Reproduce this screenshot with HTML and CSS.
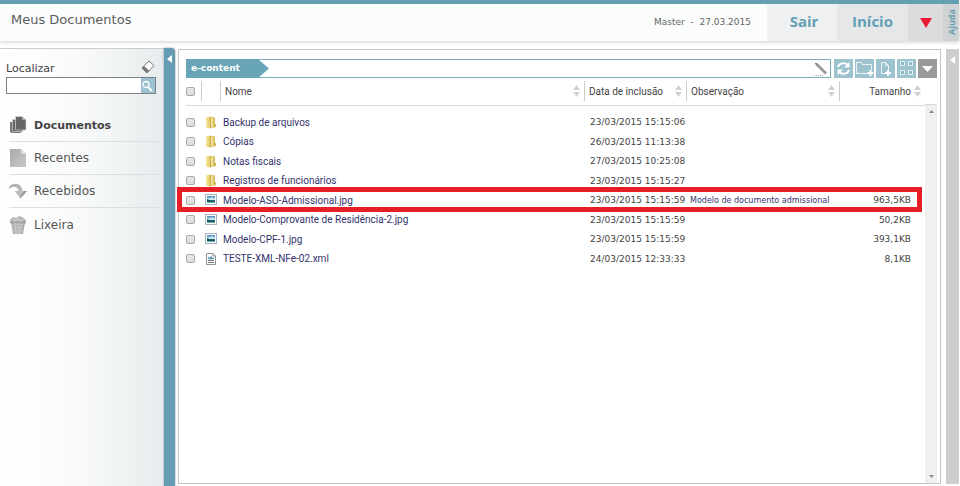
FILE: index.html
```html
<!DOCTYPE html>
<html lang="pt-BR">
<head>
    <meta charset="UTF-8">
    <title>Meus Documentos</title>
    <link rel="stylesheet" href="styles.css">
</head>
<body>
    <svg class="defs" width="0" height="0" aria-hidden="true">
        <defs>
            <linearGradient id="gold" x1="0" x2="1" y1="0" y2="0">
                <stop offset="0" stop-color="#f5ea9f"/>
                <stop offset="1" stop-color="#dfc55e"/>
            </linearGradient>
            <linearGradient id="sky" x1="0" x2="0" y1="0" y2="1">
                <stop offset="0" stop-color="#3f86b8"/>
                <stop offset="0.5" stop-color="#c6e6ee"/>
                <stop offset="0.6" stop-color="#1f6b70"/>
                <stop offset="1" stop-color="#7fc0bb"/>
            </linearGradient>
            <linearGradient id="gray" x1="0" x2="1" y1="0" y2="1">
                <stop offset="0" stop-color="#a9a9a9"/>
                <stop offset="1" stop-color="#c9c9c9"/>
            </linearGradient>
        </defs>
        <symbol id="folder" viewBox="0 0 12 13">
            <path d="M5 1h4l1 1v6l1 1v2l-4 1H5z" fill="#dcc062"/>
            <path d="M6 2l2-.5V11l-2 .5z" fill="#efe099"/>
            <path d="M1 1.500L5.500 .5v12L1 11.500z" fill="url(#gold)"/>
            <path d="M5.500 1v11.500" stroke="#c3a345" stroke-width=".6"/>
            <path d="M9 9h2" stroke="#b8963c"/>
        </symbol>
        <symbol id="image" viewBox="0 0 12 12">
            <rect x=".5" y=".5" width="11" height="10" fill="#fff" stroke="#a9b4c0"/>
            <rect x="2" y="2" width="8" height="7" fill="url(#sky)"/>
            <path d="M2 5l3 1.500 5 .5v1H2z" fill="#17555f"/>
            <path d="M4 4.500h5l-2-1z" fill="#fff"/>
        </symbol>
        <symbol id="xml" viewBox="0 0 12 12">
            <path d="M1.500.5H8L10.500 3v8.500h-9z" fill="#fff" stroke="#8d949b"/>
            <path d="M8 .5V3h2.500" fill="#ddd" stroke="#8d949b"/>
            <path d="M3 4l1.500 2L6 4l1 2 2-1" fill="none" stroke="#4b86a5" stroke-width="1.200"/>
            <path d="M3 7.500h6M3 9.500h6" stroke="#777"/>
        </symbol>
        <symbol id="sort" viewBox="0 0 7 12">
            <path d="M3.500 0L7 5H0zM3.500 12L0 7h7z" fill="#d2d2d2"/>
        </symbol>
    </svg>

    <header class="topbar">
        <h1>Meus Documentos</h1>
        <span class="user">Master &nbsp;-&nbsp; 27.03.2015</span>
        <a href="#" class="tab sair">Sair</a>
        <a href="#" class="tab inicio">Início</a>
        <button type="button" class="more" aria-label="Mais opções">
            <svg width="12" height="10" viewBox="0 0 12 10"><path d="M0 0h12L6 10z" fill="#ed1c35"/></svg>
        </button>
        <a href="#" class="help"><span>Ajuda</span></a>
    </header>

    <main class="page">
        <aside class="sidebar">
            <form class="search">
                <div class="search-head">
                    <label for="busca">Localizar</label>
                    <button type="reset" aria-label="Limpar">
                        <svg width="14" height="14" viewBox="0 0 14 14">
                            <path d="M1 8L8 1l5 4.500L6 13z" fill="#fff" stroke="#777"/>
                            <path d="M1 8l2-2 5 4.500L6 13z" fill="#777"/>
                        </svg>
                    </button>
                </div>
                <div class="search-box">
                    <input type="text" id="busca">
                    <button type="submit" aria-label="Buscar">
                        <svg width="13" height="14" viewBox="0 0 13 14">
                            <circle cx="5" cy="5.500" r="3" fill="none" stroke="#fff" stroke-width="1.300"/>
                            <path d="M7 8l4 4" stroke="#fff" stroke-width="2"/>
                        </svg>
                    </button>
                </div>
            </form>
            <nav class="menu">
                <a href="#" class="active">
                    <svg width="18" height="20" viewBox="0 0 18 20">
                        <path d="M1 7h3v9h8v2H3l-2-1z" fill="#777"/>
                        <path d="M3.500 4.500H7v10h7v2H3.500z" fill="#666" stroke="#ddd" stroke-width=".6"/>
                        <path d="M6.500 1.500H13L17 5v10H6.500z" fill="#666" stroke="#ddd" stroke-width=".6"/>
                        <path d="M13 1.500V5h4z" fill="#aaa"/>
                    </svg>
                    Documentos
                </a>
                <a href="#">
                    <svg width="18" height="20" viewBox="0 0 18 20">
                        <path d="M1 1h11l5 5v13H1z" fill="url(#gray)"/>
                        <path d="M12 1v5h5z" fill="#dedede"/>
                    </svg>
                    Recentes
                </a>
                <a href="#">
                    <svg width="18" height="20" viewBox="0 0 19 20">
                        <path d="M0 6C3 1 13 0 14.500 10H19l-7 8-6-8h4C9 5 5 4 0 8z" fill="url(#gray)"/>
                        <path d="M12 18l7-8h-3l-4 5z" fill="#999"/>
                    </svg>
                    Recebidos
                </a>
                <a href="#">
                    <svg width="18" height="20" viewBox="0 0 18 20">
                        <path d="M1 5l3-3 3 1 3-2 3 1 4 3v3H1z" fill="#b3b3b3"/>
                        <path d="M2 8h14l-2 11H4z" fill="#adadad"/>
                        <path d="M1 7.500h16" stroke="#a2a2a2" stroke-width="1.500"/>
                        <path d="M3 10h12M3 13h12M4 16h10M6 8l1 11M9 8v11M12 8l-1 11" stroke="#d6d6d6" stroke-dasharray="2 1"/>
                        <path d="M4 4l2 2 3-3 2 3 3-2" fill="none" stroke="#ddd"/>
                    </svg>
                    Lixeira
                </a>
            </nav>
        </aside>
        <button type="button" class="handle handle-left" aria-label="Recolher menu">
            <svg width="5" height="8" viewBox="0 0 5 8"><path d="M5 0v8L0 4z" fill="#fff"/></svg>
        </button>

        <section class="panel">
            <div class="toolbar">
                <div class="path">
                    <a href="#" class="crumb">e-content</a>
                    <svg width="14" height="14" viewBox="0 0 14 14">
                        <path d="M1 1l3 .5 9 9-2 2-9-9z" fill="#999"/>
                        <path d="M1 1l2 .5-1 1z" fill="#555"/>
                        <path d="M0 13.500h9" stroke="#aaa" stroke-dasharray="1 1"/>
                    </svg>
                </div>
                <button type="button" aria-label="Atualizar">
                    <svg width="19" height="19" viewBox="0 0 19 19" fill="none" stroke="#fff" stroke-width="2">
                        <path d="M4 8c1-4 7-5 10-2M15 11c-1 4-7 5-10 2"/>
                        <path d="M15.500 3v5.500H10zM3.500 16v-5.500H9z" fill="#fff" stroke="none"/>
                    </svg>
                </button>
                <button type="button" aria-label="Nova pasta">
                    <svg width="19" height="19" viewBox="0 0 19 19" fill="none" stroke="#fff">
                        <path d="M13 14.500H1.500v-11h5l1 2h9V11" opacity=".8"/>
                        <path d="M15.500 11v6M12.500 14h6" stroke-width="2"/>
                    </svg>
                </button>
                <button type="button" aria-label="Novo documento">
                    <svg width="19" height="19" viewBox="0 0 19 19" fill="none" stroke="#fff">
                        <path d="M9 14.500H5.500v-11h4l3 3V11M9.500 3.500v3h3" opacity=".8"/>
                        <path d="M12 11v6M9 14h6" stroke-width="2"/>
                    </svg>
                </button>
                <button type="button" aria-label="Grade">
                    <svg width="19" height="19" viewBox="0 0 19 19" fill="#8fb9c6" stroke="#e4eff2">
                        <rect x="3.500" y="2.500" width="4" height="4"/>
                        <rect x="11.500" y="2.500" width="4" height="4"/>
                        <rect x="3.500" y="11.500" width="4" height="4"/>
                        <rect x="11.500" y="11.500" width="4" height="4"/>
                    </svg>
                </button>
                <button type="button" class="gray" aria-label="Opções">
                    <svg width="19" height="19" viewBox="0 0 19 19"><path d="M4 7h11l-5.500 6z" fill="#fff"/></svg>
                </button>
            </div>

            <div class="list">
                <table>
                    <thead>
                        <tr>
                            <th class="c-check"><input type="checkbox" aria-label="Selecionar todos"></th>
                            <th class="c-icon"><div></div></th>
                            <th class="c-name"><div>Nome <svg width="7" height="12"><use href="#sort"/></svg></div></th>
                            <th class="c-date"><div>Data de inclusão <svg width="7" height="12"><use href="#sort"/></svg></div></th>
                            <th class="c-obs"><div>Observação <svg width="7" height="12"><use href="#sort"/></svg></div></th>
                            <th class="c-size"><div>Tamanho <svg width="7" height="12"><use href="#sort"/></svg></div></th>
                        </tr>
                    </thead>
                    <tbody>
                        <tr>
                            <td><input type="checkbox" aria-label="Backup de arquivos"></td>
                            <td><svg width="12" height="13"><use href="#folder"/></svg></td>
                            <td class="name"><a href="#">Backup de arquivos</a></td>
                            <td class="date">23/03/2015 15:15:06</td>
                            <td class="obs"></td>
                            <td class="size"></td>
                        </tr>
                        <tr>
                            <td><input type="checkbox" aria-label="Cópias"></td>
                            <td><svg width="12" height="13"><use href="#folder"/></svg></td>
                            <td class="name"><a href="#">Cópias</a></td>
                            <td class="date">26/03/2015 11:13:38</td>
                            <td class="obs"></td>
                            <td class="size"></td>
                        </tr>
                        <tr>
                            <td><input type="checkbox" aria-label="Notas fiscais"></td>
                            <td><svg width="12" height="13"><use href="#folder"/></svg></td>
                            <td class="name"><a href="#">Notas fiscais</a></td>
                            <td class="date">27/03/2015 10:25:08</td>
                            <td class="obs"></td>
                            <td class="size"></td>
                        </tr>
                        <tr>
                            <td><input type="checkbox" aria-label="Registros de funcionários"></td>
                            <td><svg width="12" height="13"><use href="#folder"/></svg></td>
                            <td class="name"><a href="#">Registros de funcionários</a></td>
                            <td class="date">23/03/2015 15:15:27</td>
                            <td class="obs"></td>
                            <td class="size"></td>
                        </tr>
                        <tr class="marked">
                            <td><input type="checkbox" aria-label="Modelo-ASO-Admissional.jpg"></td>
                            <td><svg width="12" height="12"><use href="#image"/></svg></td>
                            <td class="name"><a href="#">Modelo-ASO-Admissional.jpg</a></td>
                            <td class="date">23/03/2015 15:15:59</td>
                            <td class="obs">Modelo de documento admissional</td>
                            <td class="size">963,5KB</td>
                        </tr>
                        <tr>
                            <td><input type="checkbox" aria-label="Modelo-Comprovante de Residência-2.jpg"></td>
                            <td><svg width="12" height="12"><use href="#image"/></svg></td>
                            <td class="name"><a href="#">Modelo-Comprovante de Residência-2.jpg</a></td>
                            <td class="date">23/03/2015 15:15:59</td>
                            <td class="obs"></td>
                            <td class="size">50,2KB</td>
                        </tr>
                        <tr>
                            <td><input type="checkbox" aria-label="Modelo-CPF-1.jpg"></td>
                            <td><svg width="12" height="12"><use href="#image"/></svg></td>
                            <td class="name"><a href="#">Modelo-CPF-1.jpg</a></td>
                            <td class="date">23/03/2015 15:15:59</td>
                            <td class="obs"></td>
                            <td class="size">393,1KB</td>
                        </tr>
                        <tr>
                            <td><input type="checkbox" aria-label="TESTE-XML-NFe-02.xml"></td>
                            <td><svg width="12" height="12"><use href="#xml"/></svg></td>
                            <td class="name"><a href="#">TESTE-XML-NFe-02.xml</a></td>
                            <td class="date">24/03/2015 12:33:33</td>
                            <td class="obs"></td>
                            <td class="size">8,1KB</td>
                        </tr>
                    </tbody>
                </table>
                <div class="scroll">
                    <svg width="5" height="3" viewBox="0 0 5 3"><path d="M0 3L2.500 0 5 3z" fill="#8a8a8a"/></svg>
                    <svg width="5" height="3" viewBox="0 0 5 3"><path d="M0 0h5L2.500 3z" fill="#8a8a8a"/></svg>
                </div>
            </div>
        </section>

        <button type="button" class="handle handle-right" aria-label="Abrir ajuda">
            <svg width="5" height="8" viewBox="0 0 5 8"><path d="M5 0v8L0 4z" fill="#fff"/></svg>
        </button>
    </main>
</body>
</html>
```
FILE: styles.css
```css
* {
    box-sizing: border-box;
}

body {
    margin: 0;
    min-height: 100vh;
    display: flex;
    flex-direction: column;
    background: #fff;
    color: #444;
    font-family: "DejaVu Sans", Verdana, sans-serif;
    font-size: 9px;
}

a {
    color: inherit;
    text-decoration: none;
}

button {
    border: none;
    padding: 0;
    background: none;
    cursor: pointer;
}

svg {
    display: block;
    flex: none;
}

.defs {
    position: absolute;
}

/* topo */
.topbar {
    display: flex;
    height: 41px;
    margin-right: 1px;
    border-top: 4px solid #659fb4;
    background: #fbfcfc;
    box-shadow: 0 1px 4px rgba(0, 0, 0, 0.2);
}

.topbar h1 {
    flex: 1;
    margin: 0;
    padding-left: 11px;
    color: #5c5c5c;
    font-size: 13px;
    font-weight: normal;
    line-height: 32px;
}

.user {
    margin-right: 16px;
    color: #666;
    line-height: 36px;
}

.tab {
    color: #62a0b5;
    font-family: "Open Sans", sans-serif;
    font-size: 15px;
    font-weight: bold;
    line-height: 34px;
    text-align: center;
}

.sair {
    width: 70px;
    padding-left: 4px;
    background: #eff0f2;
}

.inicio {
    width: 71px;
    background: #e6e7e9;
}

.more {
    display: flex;
    align-items: center;
    justify-content: center;
    width: 35px;
    background: #dcdcde;
}

.help {
    display: flex;
    align-items: center;
    justify-content: center;
    width: 16px;
    background: #d0d2d4;
    color: #69a0b3;
    font-family: "Open Sans", sans-serif;
    font-size: 9px;
    font-weight: bold;
}

.help span {
    writing-mode: vertical-rl;
    transform: rotate(180deg);
}

.page {
    flex: 1;
    display: flex;
    padding-top: 7px;
}

/* menu lateral */
.sidebar {
    width: 164px;
    padding: 11px 6px 10px;
    border-top: 1px solid #ccc;
    background: linear-gradient(to right, #fff, #f8fafa 50%, #e8ebed);
}

.search {
    margin-right: 2px;
}

.search-head {
    display: flex;
    align-items: flex-start;
    justify-content: space-between;
    height: 17px;
    font-size: 11px;
    line-height: 18px;
}

.search-head button {
    margin-right: 1px;
}

.search-box {
    display: flex;
    height: 17px;
    border: 1px solid #7d8288;
    background: #fff;
}

.search-box input {
    flex: 1;
    min-width: 0;
    border: none;
    padding: 0 3px;
    background: none;
    font: inherit;
}

.search-box button {
    width: 14px;
    background: #9cc3cf;
}

.menu {
    margin: 15px 0 0 3px;
}

.menu a {
    display: flex;
    align-items: center;
    gap: 7px;
    height: 33px;
    border-bottom: 1px solid #dcdfe1;
    color: #555;
    font-size: 12px;
}

.menu a:last-child {
    border-bottom: none;
}

.menu .active {
    color: #444;
    font-size: 11px;
    font-weight: bold;
}

.handle {
    display: flex;
    justify-content: center;
    padding-top: 7px;
}

.handle-left {
    width: 11px;
    border-top-right-radius: 4px;
    background: #639cb3;
    box-shadow: 0 0 2px rgba(0, 0, 0, 0.5);
}

.handle-right {
    width: 13px;
    margin: 1px 1px 2px 5px;
    background: #cdcdcd;
}

/* lista de documentos */
.panel {
    flex: 1;
    display: flex;
    flex-direction: column;
    margin: 1px 0 2px 3px;
    padding: 9px 3px 0 7px;
    border: 1px solid #c4c4c4;
    background: #fff;
}

.toolbar {
    display: flex;
    gap: 2px;
}

.toolbar button {
    width: 19px;
    height: 19px;
    background: #9dc3cf;
}

.toolbar .gray {
    background: #9a9a9a;
}

.path {
    flex: 1;
    display: flex;
    align-items: center;
    justify-content: space-between;
    height: 19px;
    margin-right: 1px;
    padding-right: 2px;
    border: 1px solid #7aafbf;
    border-left: none;
}

.crumb {
    width: 83px;
    padding-left: 5px;
    background: #68a5b7;
    clip-path: polygon(0 0, 72px 0, 100% 50%, 72px 100%, 0 100%);
    color: #fff;
    font-size: 9px;
    font-weight: bold;
    line-height: 19px;
}

.list {
    flex: 1;
    display: flex;
}

table {
    flex: 1;
    align-self: flex-start;
    table-layout: fixed;
    border-collapse: collapse;
}

th,
td {
    padding: 0;
    font-weight: normal;
    text-align: left;
    white-space: nowrap;
}

th {
    height: 27px;
    border-bottom: 1px solid #d9d9d9;
    font-family: Roboto, sans-serif;
    font-size: 10px;
}

th div {
    display: flex;
    align-items: center;
    justify-content: space-between;
    height: 20px;
    padding: 0 4px;
    border-left: 1px solid #ccc;
}

.c-check {
    width: 15px;
}

.c-icon {
    width: 19px;
}

.c-date {
    width: 102px;
}

.c-obs {
    width: 153px;
}

.c-size {
    width: 86px;
}

.c-size div {
    justify-content: flex-end;
    gap: 3px;
}

tbody::before {
    content: "";
    display: block;
    height: 7px;
}

tbody tr {
    height: 19px;
}

tbody tr:nth-child(even) {
    height: 20px;
}

td svg {
    margin-left: 4px;
}

input[type="checkbox"] {
    appearance: none;
    display: block;
    width: 9px;
    height: 9px;
    margin: 0;
    border: 1px solid #aaa;
    border-radius: 2px;
    background: linear-gradient(#e8e8e8, #dcdcdc);
}

.name {
    padding-left: 3px;
    color: #33336b;
    font-family: Roboto, sans-serif;
    font-size: 10px;
}

.date {
    padding-left: 6px;
}

.obs {
    padding-left: 4px;
    color: #33336b;
    font-size: 8px;
}

.size {
    padding-right: 14px;
    text-align: right;
}

.marked {
    position: relative;
}

.marked::after {
    content: "";
    position: absolute;
    inset: -4px 3px -2px -9px;
    border: 5px solid #e61e25;
}

.scroll {
    display: flex;
    flex-direction: column;
    align-items: center;
    justify-content: space-between;
    width: 12px;
    margin-top: 26px;
    padding: 5px 0;
    border-top: 1px solid #d9d9d9;
    background: #f0f0f0;
}
```
